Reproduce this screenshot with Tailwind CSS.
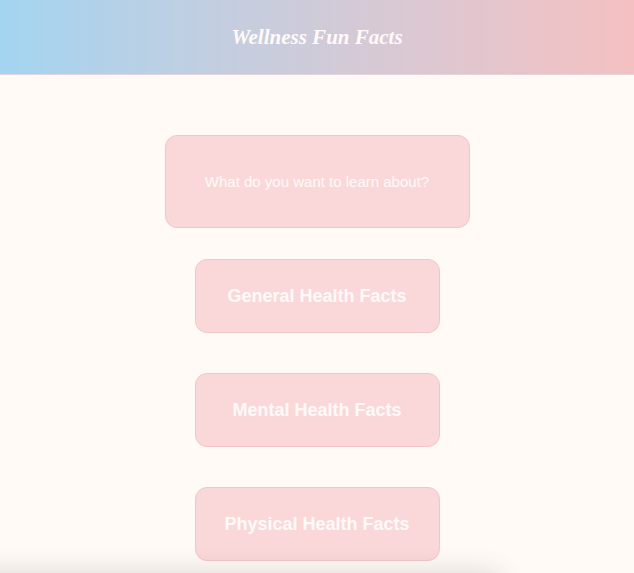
<!DOCTYPE html>
<html lang="en">
<head>
    <meta charset="UTF-8">
    <meta name="viewport" content="width=device-width, initial-scale=1.0">
    <script src="https://cdn.jsdelivr.net/npm/@tailwindcss/browser@4"></script>
    <title>Wellness Fun Facts</title>
</head>
<body class="relative min-h-screen overflow-hidden bg-[#fffaf6] font-['Liberation_Sans',Arial,sans-serif] text-[#fffaf8]">
    <header class="border-b border-[#e3d5dc] bg-linear-to-r from-[#a3d4f0] to-[#f4c0c1] py-5 text-center">
        <h1 class="font-['Apple_Chancery','Liberation_Serif',serif] text-[21px] leading-[34px] font-bold italic">Wellness Fun Facts</h1>
    </header>
    <main class="flex flex-col items-center pt-[60px]">
        <div class="mb-[31px] flex h-[93px] w-[305px] items-center justify-center rounded-xl border border-[#f2c6c9] bg-[#fad8da]">
            <p class="text-[15px] leading-5">What do you want to learn about?</p>
        </div>
        <div class="flex flex-col gap-10">
            <button type="button" class="h-[74px] w-[245px] rounded-xl border border-[#f2c6c9] bg-[#fad8da] text-lg leading-5 font-bold">General Health Facts</button>
            <button type="button" class="h-[74px] w-[245px] rounded-xl border border-[#f2c6c9] bg-[#fad8da] text-lg leading-5 font-bold">Mental Health Facts</button>
            <button type="button" class="h-[74px] w-[245px] rounded-xl border border-[#f2c6c9] bg-[#fad8da] text-lg leading-5 font-bold">Physical Health Facts</button>
        </div>
    </main>
    <!-- soft shadow along the bottom edge -->
    <div class="pointer-events-none fixed top-full -left-10 h-10 w-[540px] shadow-[0_0_28px_rgba(0,0,0,0.14)]"></div>
</body>
</html>
